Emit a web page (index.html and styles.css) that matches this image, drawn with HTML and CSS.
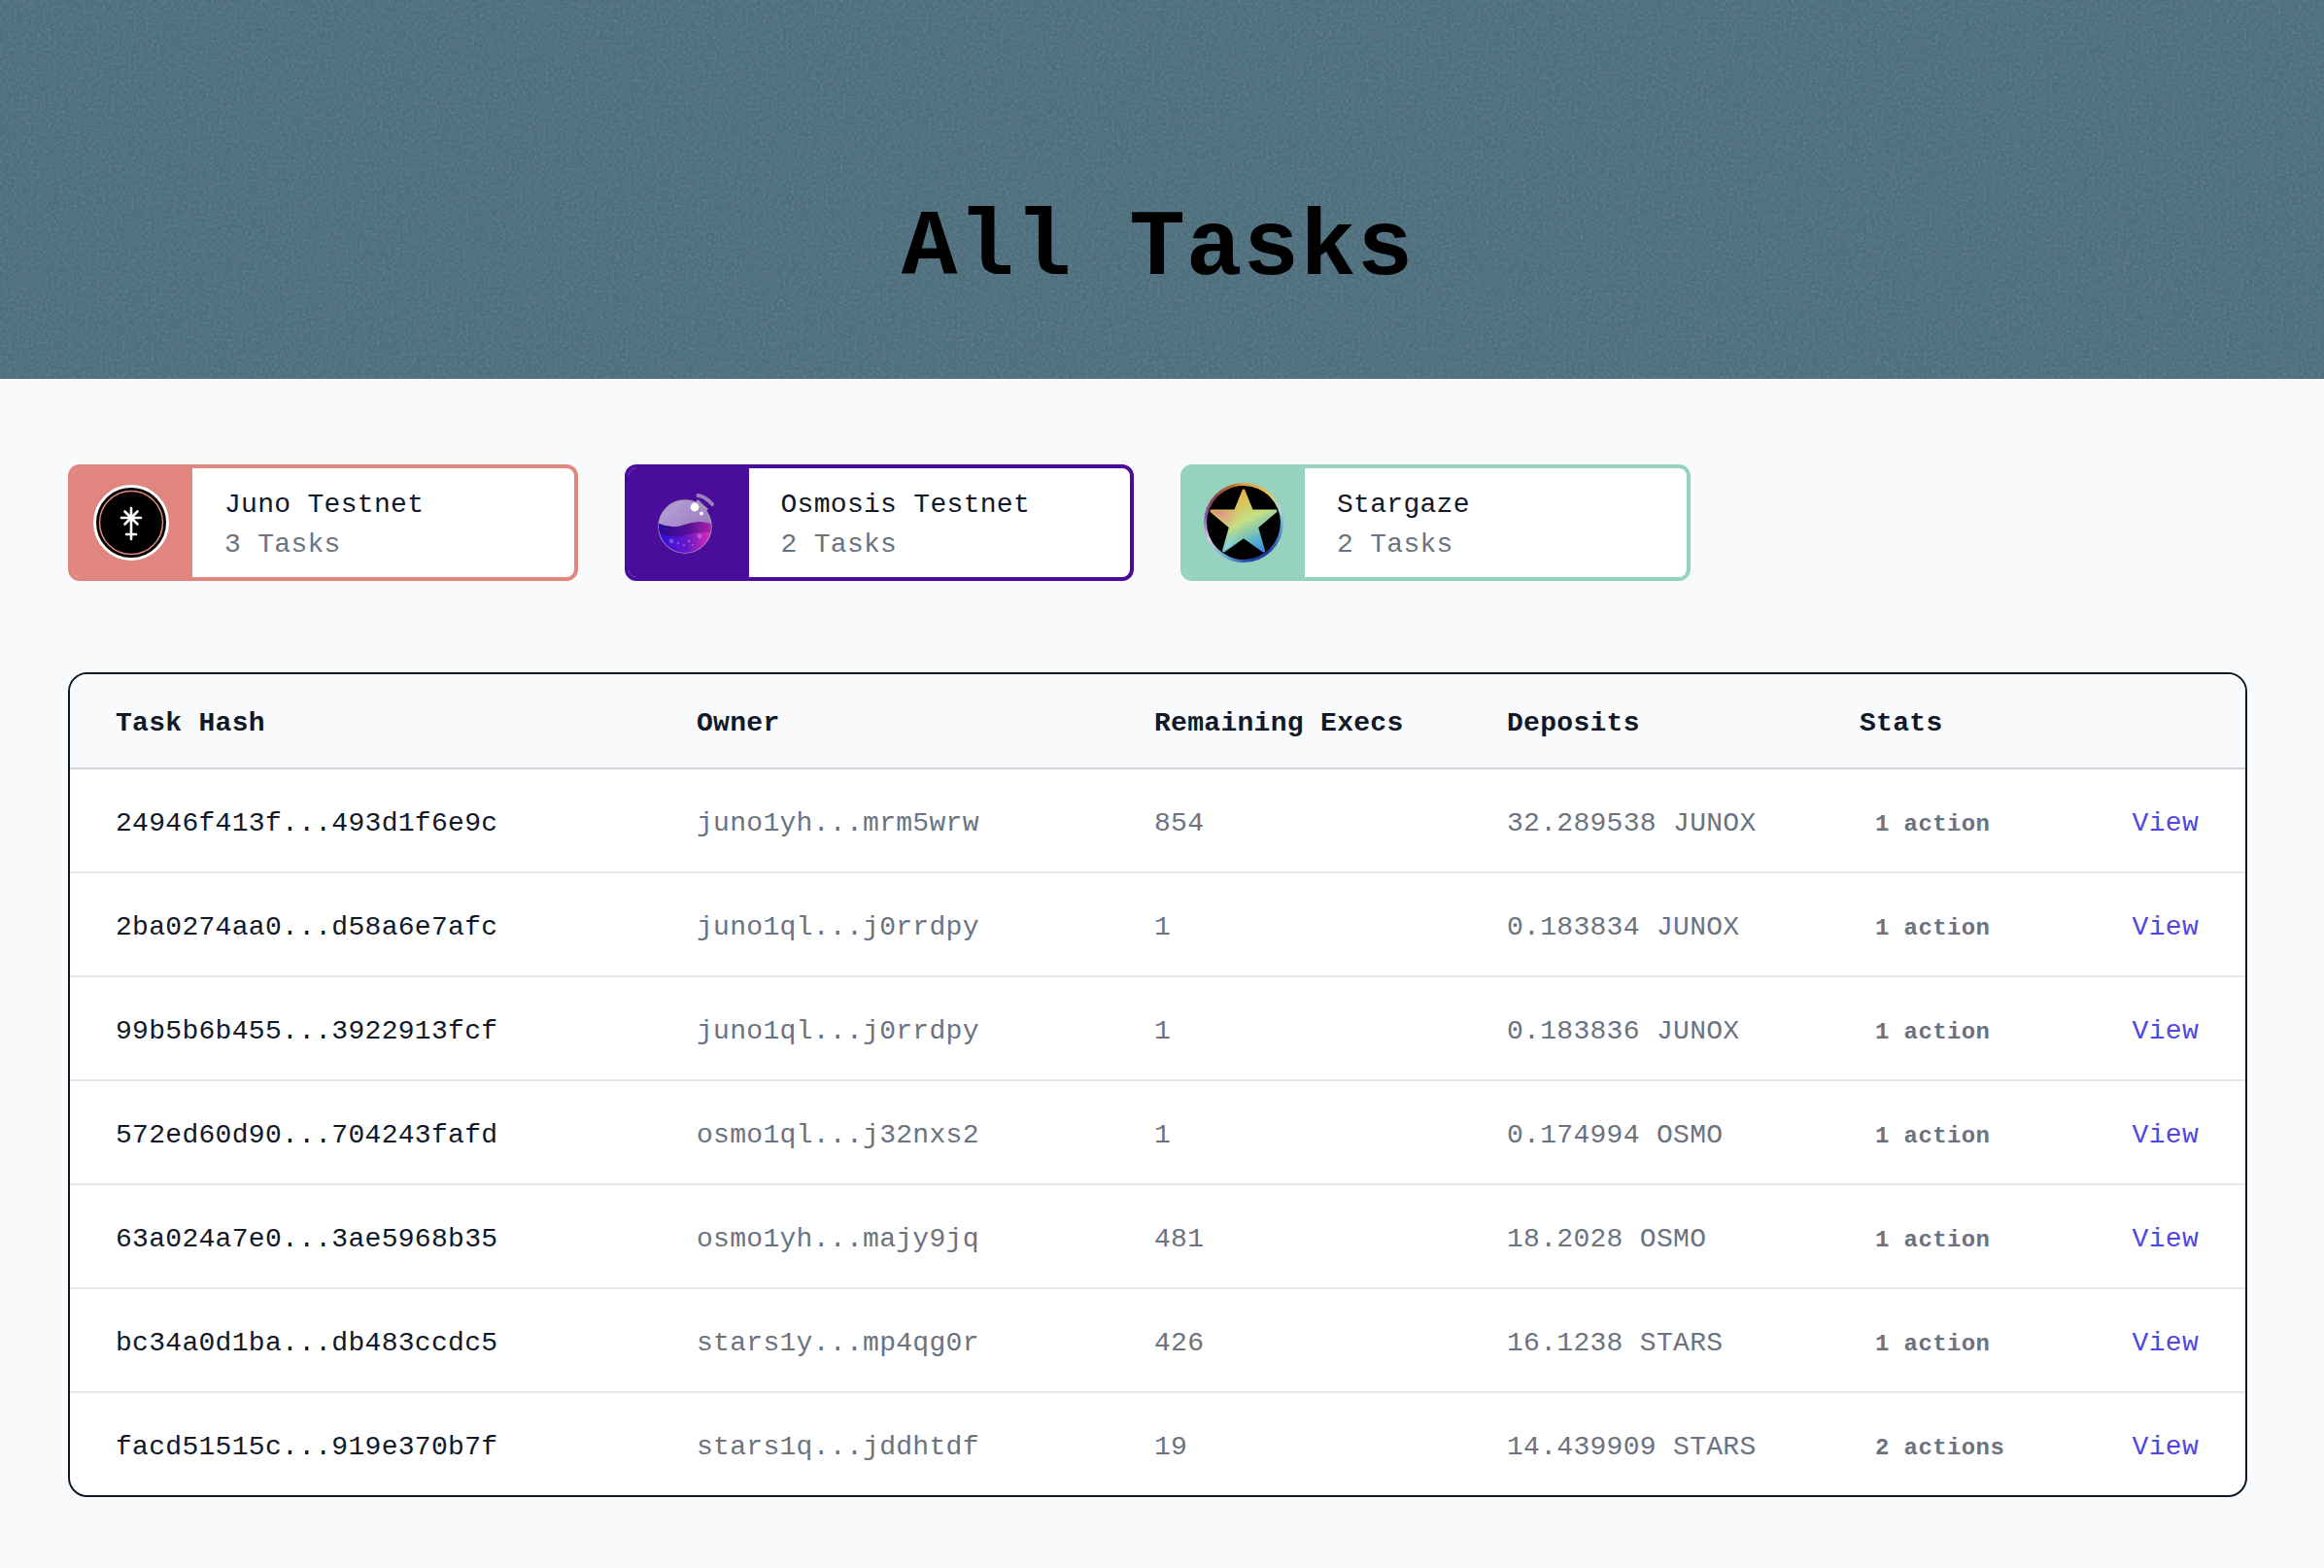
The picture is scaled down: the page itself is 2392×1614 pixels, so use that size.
FILE: index.html
```html
<!DOCTYPE html>
<html lang="en">
<head>
<meta charset="utf-8">
<title>All Tasks</title>
<link rel="stylesheet" href="styles.css">
</head>
<body>
<header class="hero">
  <svg class="hero-noise" width="100%" height="100%" aria-hidden="true">
    <filter id="grain" x="0" y="0" width="100%" height="100%">
      <feTurbulence type="fractalNoise" baseFrequency="0.34" numOctaves="3" seed="7" stitchTiles="stitch"/>
      <feColorMatrix type="matrix" values="0 0 0 0 1  0 0 0 0 1  0 0 0 0 1  0.15 0.15 0 0 -0.115"/>
    </filter>
    <rect width="100%" height="100%" filter="url(#grain)"/>
  </svg>
  <h1 class="hero-title">All Tasks</h1>
</header>
<main class="content">
  <section class="networks">
    <a class="net net-juno" href="#">
      <span class="net-icon">
        <svg width="80" height="80" viewBox="0 0 80 80">
          <circle cx="40" cy="40" r="37.5" fill="#000" stroke="#fff" stroke-width="3"/>
          <circle cx="40" cy="40" r="32.5" fill="none" stroke="#e0867f" stroke-width="1.5"/>
          <g stroke="#fff" stroke-width="2.6" stroke-linecap="round" fill="none">
            <path d="M40 25V57M30 35H50M33.500 28.500L46.500 41.500M46.500 28.500L33.500 41.500M35 52H45"/>
          </g>
        </svg>
      </span>
      <span class="net-text"><span class="net-name">Juno Testnet</span><span class="net-count">3 Tasks</span></span>
    </a>
    <a class="net net-osmo" href="#">
      <span class="net-icon">
        <svg width="80" height="80" viewBox="0 0 80 80">
          <defs>
            <linearGradient id="glass" x1="0" y1="0" x2="1" y2="1"><stop offset="0" stop-color="#b9a3d6"/><stop offset="1" stop-color="#8f6dbb"/></linearGradient>
            <linearGradient id="liquid" x1="0" y1="0" x2="1" y2="0"><stop offset="0" stop-color="#2a0de0"/><stop offset=".55" stop-color="#6a17c8"/><stop offset="1" stop-color="#e22cb4"/></linearGradient>
            <linearGradient id="wave" x1="0" y1="0" x2="1" y2="0"><stop offset="0" stop-color="#2c0a96"/><stop offset=".6" stop-color="#5a1096"/><stop offset="1" stop-color="#b022a8"/></linearGradient>
          </defs>
          <path d="M50 16L61 26L54 33L45 24Z" fill="#a78cc4"/>
          <path d="M50.500 12Q58 13 65 21" fill="none" stroke="#9b80ba" stroke-width="4" stroke-linecap="round"/>
          <circle cx="37" cy="44" r="27" fill="url(#glass)" stroke="#a99cb5" stroke-width="1.400"/>
          <path d="M10.200 41Q24 47 37 42T63.800 41Q64 43 64 44A27 27 0 0 1 10 44Q10 42 10.200 41Z" fill="url(#liquid)"/>
          <path d="M10.200 41Q24 47 37 42T63.800 41L63.400 50Q50 49 37 53T11 51Q10 47 10.200 41Z" fill="url(#wave)"/>
          <circle cx="47" cy="24" r="4.400" fill="#fff"/>
          <circle cx="54" cy="30.500" r="1.900" fill="#fff"/>
          <g fill="#fff" opacity=".25"><circle cx="23" cy="59" r="2.400"/><circle cx="30" cy="61" r="1.400"/><circle cx="36" cy="63" r="1.200"/><circle cx="41" cy="59" r="1.400"/><circle cx="45" cy="63" r="1.100"/><circle cx="52" cy="54" r="2.400"/></g>
        </svg>
      </span>
      <span class="net-text"><span class="net-name">Osmosis Testnet</span><span class="net-count">2 Tasks</span></span>
    </a>
    <a class="net net-stars" href="#">
      <span class="net-icon">
        <span class="star-ring">
          <span class="star-disc">
            <svg width="72" height="70" viewBox="0 0 72 70">
              <defs>
                <linearGradient id="starA" x1=".25" y1="0" x2=".8" y2="1"><stop offset="0" stop-color="#eba733"/><stop offset=".5" stop-color="#c5e084"/><stop offset=".78" stop-color="#62b8c8"/><stop offset="1" stop-color="#3b8ede"/></linearGradient>
                <radialGradient id="starB" gradientUnits="userSpaceOnUse" cx="2" cy="22" r="30"><stop offset="0" stop-color="#e67ea0"/><stop offset="1" stop-color="#e67ea0" stop-opacity="0"/></radialGradient>
                <radialGradient id="starC" gradientUnits="userSpaceOnUse" cx="14" cy="68" r="26"><stop offset="0" stop-color="#9be0e0"/><stop offset="1" stop-color="#9be0e0" stop-opacity="0"/></radialGradient>
              </defs>
              <g stroke-linejoin="round" stroke-width="3">
                <path d="M36 3L44.500 24H69L49.500 40.500L56.500 65L36 50.500L15.500 65L22.500 40.500L3 24H27.500Z" fill="url(#starA)" stroke="url(#starA)"/>
                <path d="M36 3L44.500 24H69L49.500 40.500L56.500 65L36 50.500L15.500 65L22.500 40.500L3 24H27.500Z" fill="url(#starB)" stroke="none"/>
                <path d="M36 3L44.500 24H69L49.500 40.500L56.500 65L36 50.500L15.500 65L22.500 40.500L3 24H27.500Z" fill="url(#starC)" stroke="none"/>
              </g>
            </svg>
          </span>
        </span>
      </span>
      <span class="net-text"><span class="net-name">Stargaze</span><span class="net-count">2 Tasks</span></span>
    </a>
  </section>

  <section class="table-wrap">
    <table class="tasks">
      <colgroup>
        <col class="col-hash"><col class="col-owner"><col class="col-execs"><col class="col-deposit"><col class="col-stats"><col class="col-view">
      </colgroup>
      <thead>
        <tr><th>Task Hash</th><th>Owner</th><th>Remaining Execs</th><th>Deposits</th><th>Stats</th><th></th></tr>
      </thead>
      <tbody>
        <tr><td class="hash">24946f413f...493d1f6e9c</td><td>juno1yh...mrm5wrw</td><td>854</td><td>32.289538 JUNOX</td><td><span class="badge">1 action</span></td><td class="view"><a href="#">View</a></td></tr>
        <tr><td class="hash">2ba0274aa0...d58a6e7afc</td><td>juno1ql...j0rrdpy</td><td>1</td><td>0.183834 JUNOX</td><td><span class="badge">1 action</span></td><td class="view"><a href="#">View</a></td></tr>
        <tr><td class="hash">99b5b6b455...3922913fcf</td><td>juno1ql...j0rrdpy</td><td>1</td><td>0.183836 JUNOX</td><td><span class="badge">1 action</span></td><td class="view"><a href="#">View</a></td></tr>
        <tr><td class="hash">572ed60d90...704243fafd</td><td>osmo1ql...j32nxs2</td><td>1</td><td>0.174994 OSMO</td><td><span class="badge">1 action</span></td><td class="view"><a href="#">View</a></td></tr>
        <tr><td class="hash">63a024a7e0...3ae5968b35</td><td>osmo1yh...majy9jq</td><td>481</td><td>18.2028 OSMO</td><td><span class="badge">1 action</span></td><td class="view"><a href="#">View</a></td></tr>
        <tr><td class="hash">bc34a0d1ba...db483ccdc5</td><td>stars1y...mp4qg0r</td><td>426</td><td>16.1238 STARS</td><td><span class="badge">1 action</span></td><td class="view"><a href="#">View</a></td></tr>
        <tr><td class="hash">facd51515c...919e370b7f</td><td>stars1q...jddhtdf</td><td>19</td><td>14.439909 STARS</td><td><span class="badge">2 actions</span></td><td class="view"><a href="#">View</a></td></tr>
      </tbody>
    </table>
  </section>
</main>
</body>
</html>
```
FILE: styles.css
```css
* { box-sizing: border-box; }

html, body {
  margin: 0;
  background: #f9fafb;
  color: #111827;
  font-family: "Liberation Mono", "DejaVu Sans Mono", monospace;
  font-size: 28px;
  letter-spacing: 0.3px;
}

.hero {
  position: relative;
  height: 390px;
  padding: 0 79px 85px 70px;
  background: #4c6d7c;
  display: flex;
  align-items: flex-end;
  justify-content: center;
  overflow: hidden;
}

.hero-noise {
  position: absolute;
  inset: 0;
}

.hero-title {
  position: relative;
  margin: 0;
  font-size: 96px;
  line-height: 96px;
  font-weight: 700;
  letter-spacing: 1px;
  color: #000;
}

.content {
  padding: 88px 79px 73px 70px;
}

.networks {
  display: grid;
  grid-template-columns: repeat(4, 524.5px);
  gap: 48px;
}

.net {
  display: flex;
  height: 120px;
  border: 4px solid;
  border-radius: 12px;
  background: #fff;
  color: inherit;
  text-decoration: none;
  overflow: hidden;
}

.net-juno { border-color: #e0867f; }
.net-osmo { border-color: #4a0c9a; }
.net-stars { border-color: #96d3be; }

.net-juno .net-icon { background: #e0867f; }
.net-osmo .net-icon { background: #4a0c9a; }
.net-stars .net-icon { background: #96d3be; }

.net-icon {
  flex: 0 0 124px;
  margin-left: -4px;
  padding-left: 4px;
  box-sizing: content-box;
  display: flex;
  align-items: center;
  justify-content: center;
}

.net-icon > svg,
.star-ring { margin-left: -2px; }

.net-text {
  display: flex;
  flex-direction: column;
  justify-content: center;
  padding: 4px 0 0 33px;
  line-height: 41px;
}

.net-count { color: #6b7280; }

.star-ring {
  width: 82px;
  height: 82px;
  padding: 3px;
  border-radius: 50%;
  background: conic-gradient(from 0deg, #d8a04a, #e6c060 40deg, #a8d8d0 70deg, #5aa0d8 100deg, #1c3a9c 140deg, #2a4aa8 175deg, #6fb0d8 210deg, #d8c8e0 245deg, #8a50b0 280deg, #8a3f4a 310deg, #b86a2a 340deg, #d8a04a);
  display: block;
}

.star-disc {
  width: 100%;
  height: 100%;
  border-radius: 50%;
  background: #000;
  display: flex;
  align-items: center;
  justify-content: center;
}

.star-disc svg { margin-top: -2px; }

.table-wrap {
  margin-top: 94px;
  border: 2px solid #111827;
  border-radius: 20px;
  background: #fff;
  overflow: hidden;
}

.tasks {
  width: 100%;
  table-layout: fixed;
  border-collapse: collapse;
}

.col-hash { width: 598px; }
.col-owner { width: 471px; }
.col-execs { width: 363px; }
.col-deposit { width: 363px; }
.col-stats { width: 190px; }

.tasks th {
  height: 97px;
  padding: 4px 0 0 47px;
  text-align: left;
  font-weight: 700;
  background: #f9fafb;
  border-bottom: 2px solid #d1d5db;
}

.tasks td {
  height: 107px;
  padding: 5px 0 0 47px;
  color: #6b7280;
  border-bottom: 2px solid #e5e7eb;
  white-space: nowrap;
}

.tasks tbody tr:last-child td {
  height: 106px;
  border-bottom: 0;
}

.tasks td.hash { color: #111827; }

.badge {
  display: inline-block;
  padding-left: 16px;
  font-size: 24px;
  font-weight: 700;
  letter-spacing: 0.4px;
  color: #6b7280;
}

.tasks td.view {
  padding: 5px 48px 0 0;
  text-align: right;
}

.view a {
  color: #4f46e5;
  text-decoration: none;
}
```
